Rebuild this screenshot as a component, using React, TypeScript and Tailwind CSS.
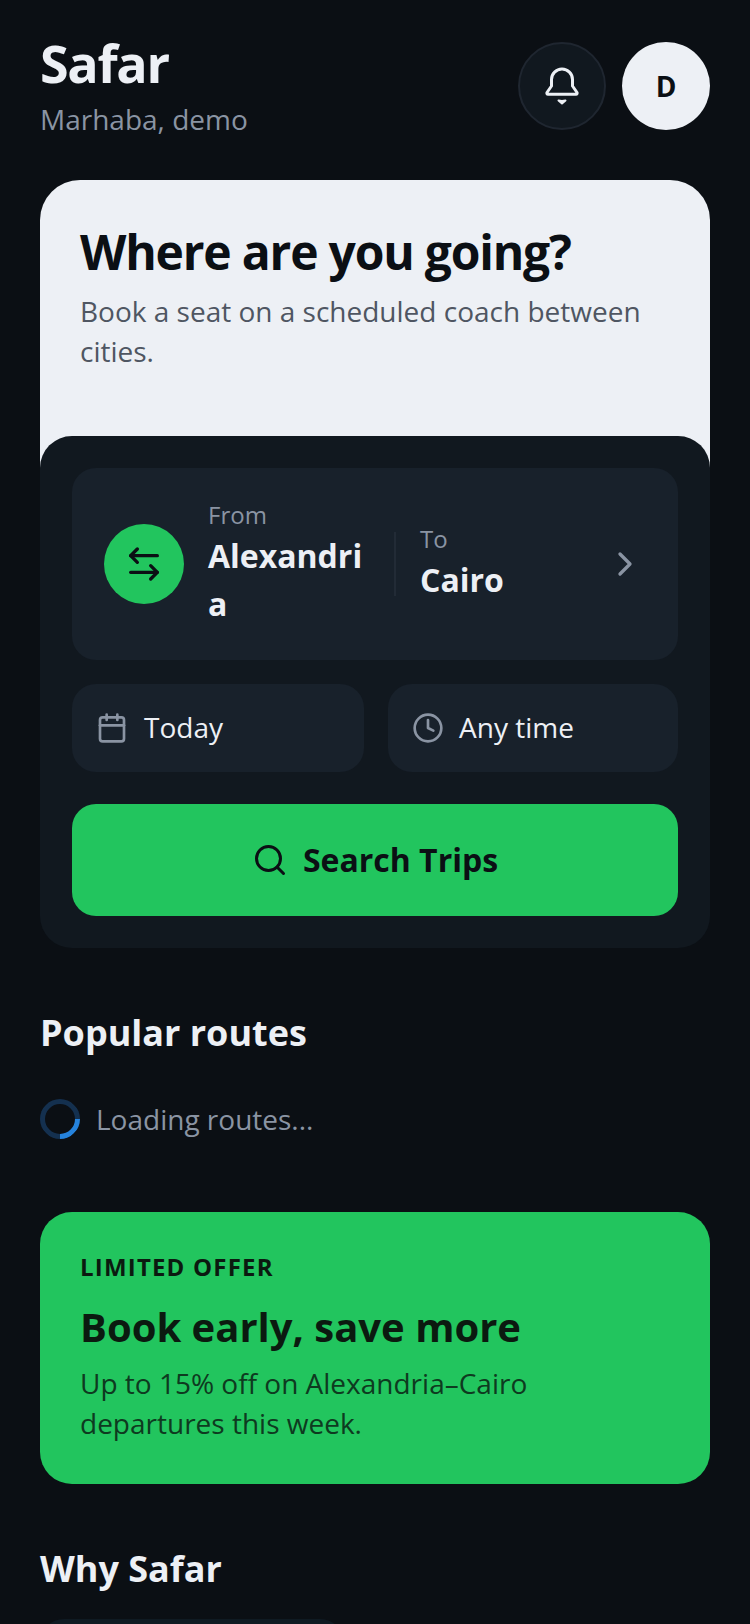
import React from 'react';
import { ArrowLeftRight, ChevronRight, Calendar, Clock, Search } from 'lucide-react';

const BellIcon = () => (
    <svg viewBox="0 0 40 40" className="h-10 w-10 text-[#edf0f5]" fill="none" stroke="currentColor" strokeWidth={3} strokeLinejoin="round" strokeLinecap="round">
        <path d="M9.5 20V13.5a10.5 10.5 0 0 1 21 0V20l4.5 6.5a1.2 1.2 0 0 1-1 1.8H6a1.2 1.2 0 0 1-1-1.8z" />
        <path d="M16.5 34.5q3.5 1 7 0l-3.5 3z" fill="currentColor" strokeWidth={2} />
    </svg>
);

export default function App() {
    return (
        <div className="h-[1624px] overflow-hidden bg-[#0b0f14] font-['Open_Sans',sans-serif]">
            <div className="px-10 pt-[33px]">
                {/* Header */}
                <div className="flex items-start justify-between">
                    <div>
                        <h1 className="text-[52px] leading-[60px] font-bold tracking-tight text-[#edf0f5]">Safar</h1>
                        <p className="mt-[7px] text-[28px] leading-[38px] text-[#8a94a3]">Marhaba, demo</p>
                    </div>
                    <div className="mt-[9px] flex gap-4">
                        <button className="flex h-[88px] w-[88px] items-center justify-center rounded-full border-2 border-[#1f2630] bg-[#11181f]">
                            <BellIcon />
                        </button>
                        <div className="flex h-[88px] w-[88px] items-center justify-center rounded-full bg-[#edf0f5] text-[28px] font-bold text-[#0b0f14]">
                            D
                        </div>
                    </div>
                </div>

                {/* Hero */}
                <div className="mt-[42px]">
                    <div className="rounded-t-[40px] bg-[#edf0f5] px-10 pt-[42px] pb-[105px]">
                        <h2 className="text-[48px] leading-[60px] font-bold tracking-tight text-[#0b0f14]">Where are you going?</h2>
                        <p className="mt-[9px] text-[28px] leading-[40px] text-[#4f5662]">Book a seat on a scheduled coach between cities.</p>
                    </div>
                    <div className="relative -mt-10 rounded-[32px] bg-[#11181f] p-8">
                        <div className="flex items-center rounded-[24px] bg-[#18212b] py-8 pr-[33px] pl-8">
                            <div className="flex h-20 w-20 shrink-0 items-center justify-center rounded-full bg-[#22c55e]">
                                <ArrowLeftRight className="h-10 w-10 text-[#0b0f14]" strokeWidth={2} />
                            </div>
                            <div className="ml-6 w-[162px] shrink-0">
                                <div className="mb-[3px] text-[24px] leading-[29px] text-[#8a94a3]">From</div>
                                <div className="text-[32px] leading-[48px] font-bold break-all text-[#edf0f5]">Alexandria</div>
                            </div>
                            <div className="mx-6 h-16 w-0.5 bg-[#222b36]" />
                            <div className="flex-1">
                                <div className="mb-[3px] text-[24px] leading-[29px] text-[#8a94a3]">To</div>
                                <div className="text-[32px] leading-[48px] font-bold text-[#edf0f5]">Cairo</div>
                            </div>
                            <ChevronRight className="h-10 w-10 text-[#8a94a3]" strokeWidth={2} />
                        </div>

                        <div className="mt-6 flex gap-6">
                            <div className="flex h-[88px] w-[292px] items-center gap-4 rounded-[24px] bg-[#18212b] px-6">
                                <Calendar className="h-8 w-8 text-[#8a94a3]" strokeWidth={2} />
                                <span className="mb-0.5 text-[28px] text-[#edf0f5]">Today</span>
                            </div>
                            <div className="flex h-[88px] flex-1 items-center gap-[15px] rounded-[24px] bg-[#18212b] px-6">
                                <Clock className="h-8 w-8 text-[#8a94a3]" strokeWidth={2} />
                                <span className="mb-0.5 text-[28px] text-[#edf0f5]">Any time</span>
                            </div>
                        </div>

                        <button className="mt-8 flex h-28 w-full items-center justify-center gap-[15px] rounded-[24px] bg-[#22c55e]">
                            <Search className="h-9 w-9 text-[#0b0f14]" strokeWidth={2} />
                            <span className="text-[32px] font-bold text-[#0b0f14]">Search Trips</span>
                        </button>
                    </div>
                </div>

                {/* Popular routes */}
                <h3 className="mt-[61px] text-[36px] leading-[48px] font-bold text-[#edf0f5]">Popular routes</h3>
                <div className="mt-[41px] flex items-center gap-4">
                    <div className="h-10 w-10 rotate-45 rounded-full border-[5px] border-[#14304f] border-r-[#2582dc]" />
                    <span className="text-[28px] text-[#8a94a3]">Loading routes...</span>
                </div>

                {/* Offer */}
                <div className="mt-[72px] rounded-[32px] bg-[#22c55e] p-10 pb-[41px]">
                    <div className="text-[24px] leading-[30px] font-bold tracking-[1.2px] text-[#0b1a10]">LIMITED OFFER</div>
                    <div className="mt-[19px] text-[40px] leading-[52px] font-bold text-[#0b1a10]">Book early, save more</div>
                    <p className="mt-[10px] text-[28px] leading-[40px] text-[#0e3a20]">Up to 15% off on Alexandria–Cairo departures this week.</p>
                </div>

                {/* Why Safar */}
                <h3 className="mt-[61px] text-[36px] leading-[48px] font-bold text-[#edf0f5]">Why Safar</h3>
                <div className="mt-[26px] h-24 w-[304px] rounded-[24px] bg-[#0f1a22]" />
            </div>
        </div>
    );
}
